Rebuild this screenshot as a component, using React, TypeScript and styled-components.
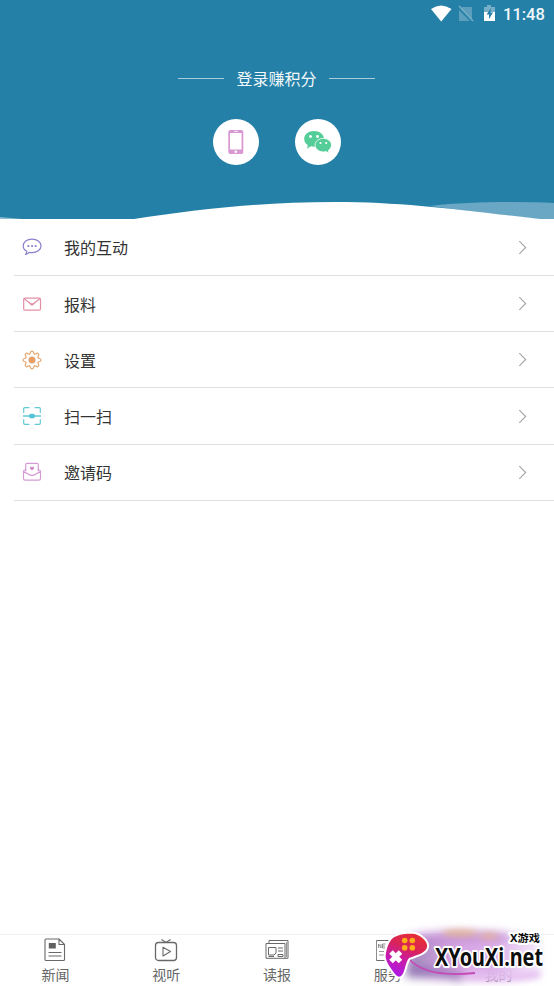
import React from 'react';
import styled, { createGlobalStyle } from 'styled-components';

const GlobalStyle = createGlobalStyle`
  * { box-sizing: border-box; }
  body { margin: 0; background: #fff; font-family: "Noto Sans CJK SC", sans-serif; }
  svg { display: block; }
`;

const Screen = styled.div`
  position: relative;
  display: flex;
  flex-direction: column;
  width: 554px;
  height: 986px;
  overflow: hidden;
  background: #fff;
`;

const Header = styled.header`
  display: flex;
  flex-direction: column;
  align-items: center;
  height: 219px;
  background: #2580a7;
  color: #fff;
`;

const StatusBar = styled.div`
  display: flex;
  align-self: stretch;
  justify-content: flex-end;
  height: 28px;
`;

const Clock = styled.time`
  width: 42px;
  margin: 0 9px 0 7px;
  font: 500 16.5px/29px Roboto, sans-serif;
  color: #f1f8fb;
  white-space: nowrap;
`;

const LoginTitle = styled.div`
  display: flex;
  align-items: center;
  gap: 12px;
  height: 24px;
  margin: 38px 1px 0 0;
  font-size: 16px;
  line-height: 24px;
  color: #f2f8fb;
  &::before, &::after {
    content: '';
    width: 46px;
    height: 1px;
    background: #a9cddd;
  }
`;

const LoginOptions = styled.div`
  display: flex;
  gap: 36px;
  margin-top: 29px;
`;

const RoundButton = styled.button`
  display: grid;
  place-items: center;
  width: 46px;
  height: 46px;
  padding: 0;
  border: 0;
  border-radius: 50%;
  background: #fff;
`;

const WaveSlot = styled.div`
  margin-top: auto;
  height: 19px;
`;

const Menu = styled.nav`
  flex: 1;
  padding: 0.7px 0 0 14px;
`;

const MenuRow = styled.div`
  display: flex;
  align-items: center;
  height: 56.25px;
  padding: 0 27px 0 8px;
  border-bottom: 1px solid #dfdfdf;
`;

const MenuLabel = styled.span`
  flex: 1;
  margin-left: 22px;
  font-size: 16px;
  line-height: 24px;
  color: #333;
`;

const TabBar = styled.footer`
  display: grid;
  grid-template-columns: repeat(5, 1fr);
  height: 52px;
  border-top: 1px solid #efefef;
`;

const Tab = styled.div`
  display: flex;
  flex-direction: column;
  align-items: center;
  padding-top: 3px;
  font-size: 14px;
  line-height: 20px;
  color: #666;
`;

const TabLabel = styled.span`
  margin-top: 2px;
`;

const Watermark = styled.div`
  position: absolute;
  right: 0;
  bottom: 0;
`;

const StatusIcons = () => (
  <svg width="66" height="28" viewBox="430 0 66 28">
    <path d="M431 9Q441 2 451.500 9L441.200 21.500Z" fill="#fff" />
    <path d="M462 7H472V20L461 9ZM459 10L470 21H459Z" fill="#5c9fbd" />
    <path d="M459 6L473 21" stroke="#74adc6" strokeWidth="1.500" />
    <path d="M484 7H487V5H491V7H495V12H484Z" fill="#78afc8" />
    <path d="M484 12H495V21H484Z" fill="#fff" />
    <path d="M491 8L486.500 14.500H489V19L493 12.500H490.500Z" fill="#2580a7" />
  </svg>
);

const PhoneIcon = () => (
  <svg width="18" height="26" viewBox="0 0 18 26">
    <rect x="1.300" y="1" width="15" height="24" rx="2" fill="#d898d2" />
    <path d="M3 4H14.600V20.500H3Z" fill="#fff" />
    <path d="M7 2.400H10.800" stroke="#fff" strokeWidth=".8" />
    <circle cx="8.800" cy="22.700" r="1.300" fill="#fff" />
  </svg>
);

const WechatIcon = () => (
  <svg width="30" height="26" viewBox="0 0 30 26">
    <path d="M11 2C5.400 2 1.200 5.500 1.200 10c0 2.700 1.400 4.700 3.600 6.100L4 19.500l4-2.200c1 .3 2 .4 3 .4 5.600 0 10-3.400 10-7.800S16.600 2 11 2Z" fill="#55cd98" />
    <path d="M20.300 9.400c-4.600 0-8.200 2.900-8.200 6.700s3.600 6.800 8.200 6.800c.9 0 1.800-.2 2.600-.4l3.200 1.800-.8-2.800c1.900-1.300 3.200-3.200 3.200-5.400 0-3.800-3.600-6.700-8.200-6.700Z" fill="#55cd98" stroke="#fff" strokeWidth=".8" />
    <g fill="#fff"><circle cx="7.500" cy="7.500" r="1.400" /><circle cx="14.500" cy="7.500" r="1.400" /><circle cx="17.500" cy="14" r="1.100" /><circle cx="23.200" cy="14" r="1.100" /></g>
  </svg>
);

const Wave = () => (
  <svg width="554" height="19" viewBox="0 200 554 19">
    <path d="M429 206C455 203 480 202 510 202Q535 202 554 203V219H537Z" fill="#69a7c4" />
    <path d="M0 217Q11 218 22 219H0Z" fill="#8bbbd0" />
    <path d="M134 219C195 210 257 202 335 202C405 202 460 210 540 219Z" fill="#fff" />
  </svg>
);

const lineProps = { fill: 'none', strokeWidth: 1.2, strokeLinecap: 'round', strokeLinejoin: 'round' } as const;

const ChatIcon = () => (
  <svg width="20" height="20" viewBox="0 0 20 20" stroke="#8980cd" {...lineProps}>
    <path d="M4.800 14.200C2.500 13 1.200 11.100 1.200 8.900 1.200 5 5 2.200 10 2.200s9 2.800 9 6.700-4 6.700-9 6.700c-1 0-1.900-.1-2.800-.3C6.100 16.500 5 17.200 3.500 17.500c.8-1 1.200-2 1.300-3.300Z" />
    <path d="M6.300 9h.2M10 9h.2M13.600 9h.2" strokeWidth="2" />
  </svg>
);

const MailIcon = () => (
  <svg width="20" height="20" viewBox="0 0 20 20" stroke="#e390a5" {...lineProps}>
    <rect x="1.700" y="4.100" width="16.800" height="12" rx="1.200" />
    <path d="M2.500 5l6.500 5q1 .8 2 0l6.500-5" />
    <path d="M6 8l3 1.500h2.500L14 8l-3 3.200q-1 .8-2 0Z" fill="#e390a5" stroke="none" />
  </svg>
);

const gearTeeth = [0, 45, 90, 135, 180, 225, 270, 315];

const GearIcon = () => (
  <svg width="20" height="20" viewBox="0 0 20 20" stroke="#e6a973" {...lineProps}>
    {gearTeeth.map((angle) => (
      <path key={angle} transform={`rotate(${angle} 10 10)`} d="M7.500 3.960Q8.300 3.600 8.500 2.300 8.700 1.100 10 1.100T11.500 2.300Q11.700 3.600 12.500 3.960" />
    ))}
    <circle cx="10" cy="10" r="3.500" fill="#e5a067" stroke="none" />
  </svg>
);

const ScanIcon = () => (
  <svg width="20" height="20" viewBox="0 0 20 20" stroke="#62c9d6" {...lineProps}>
    <path d="M1.700 6.500V2.700q0-1 1-1H7M13 1.700h4.300q1 0 1 1V6.500M1.700 13.500v3.800q0 1 1 1H7M13 18.300h4.300q1 0 1-1v-3.800" />
    <path d="M1.500 10h17" strokeWidth="1.500" />
    <rect x="7.200" y="7.700" width="5.600" height="4.600" rx="1.500" fill="#55c4d2" stroke="none" />
  </svg>
);

const InviteIcon = () => (
  <svg width="20" height="20" viewBox="0 0 20 20" stroke="#d49bd4" {...lineProps}>
    <path d="M3.700 9V2.600q0-1.200 1.200-1.200h10.200q1.200 0 1.200 1.200V9" />
    <path d="M3.700 7.500Q1.500 8 1.500 9.500v7q0 1.700 1.700 1.700h13.600q1.700 0 1.700-1.700v-7q0-1.500-2.200-2M1.800 9.700l6 3.200q2.200 1.100 4.400 0l6-3.200" />
    <path d="M10 8.400L8 6.300q-.5-1.400.6-1.600.8-.1 1.400.7.600-.8 1.400-.7 1.100.2.600 1.600Z" fill="#d17fc5" stroke="none" />
  </svg>
);

const Chevron = () => (
  <svg width="9" height="15" viewBox="0 0 9 15" fill="none" stroke="#a5a5a5" strokeWidth="1.100">
    <path d="M1.300 1.200L7.700 7.500L1.300 13.800" />
  </svg>
);

const TabSvg = styled.svg.attrs({ width: 24, height: 24, viewBox: '0 0 24 24' })`
  fill: none;
  stroke: #696969;
  stroke-width: 1.1;
  stroke-linejoin: round;
`;

const NewsIcon = () => (
  <TabSvg>
    <path d="M3 1H16L21.500 6.500v15q0 1-1 1H3q-1 0-1-1V2q0-1 1-1ZM16 1V6.500h5.500M5.500 14.500h13M5.500 18h13" />
    <path d="M5.800 5h7v5.500h-7Z" fill="#606060" stroke="none" />
  </TabSvg>
);

const VideoIcon = () => (
  <TabSvg>
    <rect x="1.500" y="4.500" width="21" height="18" rx="3" strokeWidth="1.300" />
    <path d="M7.500 1.500L12 4.500l4.500-3M9 9.300l7.500 4.200-7.500 4.500Z" />
  </TabSvg>
);

const PaperIcon = () => (
  <TabSvg>
    <path d="M1 5.500h19v14.800H1ZM4 5.500v-3h19v17.800h-3M3.500 9.500H11V15l-2 2H3.500ZM13 10h5M13 13h5M13 16.500h5v2h-5ZM3.500 18.500H9" strokeWidth="1" />
    <path d="M21.500 4v15" strokeWidth=".7" />
  </TabSvg>
);

const ServiceIcon = () => (
  <TabSvg>
    <rect x=".2" y="2.500" width="23" height="20" rx="1" />
    <path d="M2.500 10V6L5 10V6M9.500 6h-3v4h3M6.500 8h2.500M3 13.500h5M3 17h5" strokeWidth=".7" />
  </TabSvg>
);

const ProfileIcon = () => (
  <TabSvg>
    <circle cx="12" cy="8" r="5" />
    <path d="M2 22q0-8 10-8t10 8" />
  </TabSvg>
);

const BrandMark = () => (
  <svg width="194" height="66" viewBox="360 920 194 66">
    <defs>
      <filter id="haze" x="-30%" y="-40%" width="160%" height="180%"><feGaussianBlur stdDeviation="5" /></filter>
      <filter id="softGlow" x="-30%" y="-60%" width="160%" height="220%"><feGaussianBlur stdDeviation="3" /></filter>
      <linearGradient id="pad" x1=".15" y1="1" x2=".55" y2="0">
        <stop offset="0" stopColor="#a819f0" /><stop offset=".4" stopColor="#c71bac" /><stop offset=".7" stopColor="#d8235c" /><stop offset="1" stopColor="#e42d39" />
      </linearGradient>
      <linearGradient id="glow">
        <stop offset="0" stopColor="#9a86b8" /><stop offset=".3" stopColor="#d0a0de" /><stop offset=".65" stopColor="#ddb0ea" /><stop offset="1" stopColor="#f4eafa" />
      </linearGradient>
    </defs>
    <g filter="url(#haze)">
      <path d="M408 937Q460 927 540 937V975Q480 983 406 977Z" fill="url(#glow)" />
      <path d="M414 939Q440 933 508 937" stroke="#bd83d3" strokeWidth="7" fill="none" />
      <path d="M407 973q30-3 55 5" stroke="#8864ae" strokeWidth="7" fill="none" />
    </g>
    <g filter="url(#softGlow)">
      <ellipse cx="460" cy="933" rx="18" ry="3.500" fill="#e3b27f" opacity=".75" />
      <ellipse cx="489" cy="936" rx="10" ry="4" fill="#e6b495" opacity=".7" />
      <path d="M467 974Q504 981 540 974" stroke="#e5bdf1" strokeWidth="7" fill="none" />
    </g>
    <path d="M409 959Q426 978 475 973" fill="none" stroke="#c449b6" strokeWidth="1.800" />
    <path d="M393 938C398 934 408 933 415 934C422 936 428 942 427 947C426 953 417 955 409 958C405 963 405 973 401 976Q398 978 395 974C390 967 384 960 386 953C387 948 389 941 393 938Z" fill="url(#pad)" stroke="#fff" strokeWidth="4" paintOrder="stroke" />
    <path d="M391 952l9.500 9.500M400.500 952l-9.500 9.500" stroke="#fff" strokeWidth="5" />
    <g fill="#ffae19"><circle cx="404.700" cy="940.500" r="2.800" /><circle cx="412.300" cy="940.500" r="2.800" /><circle cx="404.700" cy="947.700" r="2.800" /><circle cx="412.300" cy="947.700" r="2.800" /></g>
    <g fill="#0d0d0d" stroke="#fff" paintOrder="stroke" strokeLinejoin="round" fontWeight="700">
      <text x="510" y="942" fontSize="10.500" strokeWidth="4" textLength="30" lengthAdjust="spacingAndGlyphs" fontFamily="Noto Sans, Noto Sans CJK SC, sans-serif">X游戏</text>
      <text x="435" y="966" fontSize="25" strokeWidth="4" textLength="108" lengthAdjust="spacingAndGlyphs" fontFamily="Noto Sans, sans-serif">XYouXi.net</text>
    </g>
  </svg>
);

const menuItems = [
  { label: '我的互动', Icon: ChatIcon },
  { label: '报料', Icon: MailIcon },
  { label: '设置', Icon: GearIcon },
  { label: '扫一扫', Icon: ScanIcon },
  { label: '邀请码', Icon: InviteIcon },
];

const tabs = [
  { label: '新闻', Icon: NewsIcon },
  { label: '视听', Icon: VideoIcon },
  { label: '读报', Icon: PaperIcon },
  { label: '服务', Icon: ServiceIcon },
  { label: '我的', Icon: ProfileIcon },
];

export default function App() {
  return (
    <>
      <GlobalStyle />
      <Screen>
        <Header>
          <StatusBar><StatusIcons /><Clock>11:48</Clock></StatusBar>
          <LoginTitle>登录赚积分</LoginTitle>
          <LoginOptions>
            <RoundButton aria-label="手机登录"><PhoneIcon /></RoundButton>
            <RoundButton aria-label="微信登录"><WechatIcon /></RoundButton>
          </LoginOptions>
          <WaveSlot><Wave /></WaveSlot>
        </Header>
        <Menu>
          {menuItems.map(({ label, Icon }) => (
            <MenuRow key={label}><Icon /><MenuLabel>{label}</MenuLabel><Chevron /></MenuRow>
          ))}
        </Menu>
        <TabBar>
          {tabs.map(({ label, Icon }) => (
            <Tab key={label}><Icon /><TabLabel>{label}</TabLabel></Tab>
          ))}
        </TabBar>
        <Watermark><BrandMark /></Watermark>
      </Screen>
    </>
  );
}
